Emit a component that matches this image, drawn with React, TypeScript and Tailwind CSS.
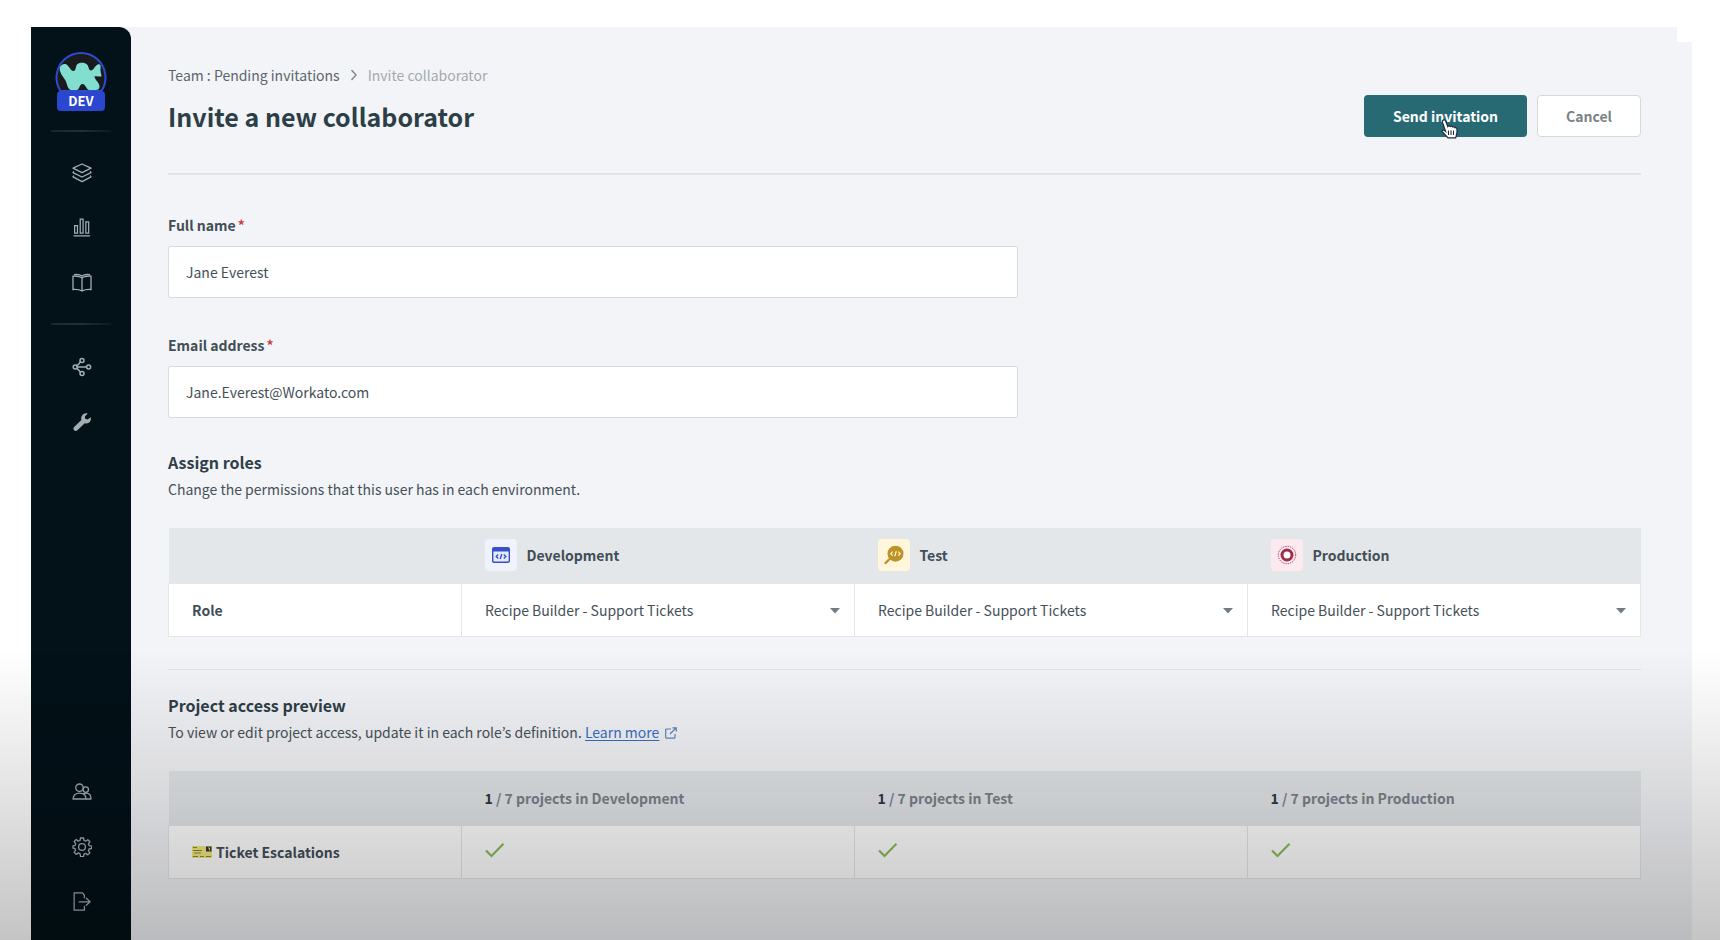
import React, { useState } from 'react';

type IconProps = { className?: string };

const stroke = {
  viewBox: '0 0 20 20',
  fill: 'none',
  stroke: 'currentColor',
  strokeWidth: 1.3,
  strokeLinejoin: 'round' as const,
  strokeLinecap: 'round' as const,
  'aria-hidden': true,
};

const LayersIcon = ({ className }: IconProps) => (
  <svg {...stroke} className={className}>
    <path d="M10 1 19 5.2 10 9.6 1 5.2Z" />
    <path d="M1.6 8.7 1 9.6 10 14 19 9.6 18.4 8.7" />
    <path d="M1.6 13 1 13.9 10 18.6 19 13.9 18.4 13" />
  </svg>
);

const ChartIcon = ({ className }: IconProps) => (
  <svg {...stroke} strokeLinejoin="miter" className={className}>
    <path d="M1.7 8h3v7.8h-3ZM7.6 1.3h3v14.5h-3ZM13.5 4h3v11.8h-3ZM1 18.7h16.5" />
  </svg>
);

const BookIcon = ({ className }: IconProps) => (
  <svg {...stroke} strokeLinejoin="miter" className={className}>
    <path d="M10 4.8V18M10 4.8C8 3.4 5 3 1 3.2V16.5C5 16.3 8 16.8 10 18 12 16.8 15 16.3 19 16.5V3.2C15 3 12 3.4 10 4.8ZM2.5 1.6C6 1.3 8.5 1.8 10 3 11.5 1.8 14 1.3 17.5 1.6" />
  </svg>
);

const NodesIcon = ({ className }: IconProps) => (
  <svg {...stroke} strokeWidth={1.5} className={className}>
    <circle cx="3.2" cy="10" r="2" />
    <circle cx="16.6" cy="10" r="2" />
    <circle cx="10" cy="3.5" r="2" />
    <circle cx="10" cy="16.5" r="2" />
    <path d="M5.2 10h9.4M4.7 8.5c1.6-.6 2.5-1.8 3.7-3.7M4.7 11.5c1.6.6 2.5 1.8 3.7 3.7" />
  </svg>
);

const WrenchIcon = ({ className }: IconProps) => (
  <svg viewBox="0 0 20 20" fill="currentColor" aria-hidden="true" className={className}>
    <path d="M18.7 5.2c.6 2-.1 4-1.5 5.2-1.3 1-3 1.3-4.5.8l-7.3 7.1c-.9.9-2.4.9-3.3 0s-.9-2.3 0-3.2L9.4 8c-.6-1.7-.2-3.8 1.1-5.1C12 1.4 14 1 15.7 1.6L12.9 4.5l.3 2.3 2.4.6Z" />
  </svg>
);

const PeopleIcon = ({ className }: IconProps) => (
  <svg {...stroke} className={className}>
    <circle cx="7.5" cy="5.7" r="3.7" />
    <path d="M1 17c0-3.8 2.6-5.8 6.5-5.8S14 13.2 14 17Z" />
    <circle cx="13.8" cy="7.6" r="2.7" />
    <path d="M11.6 11.9c.7-.5 1.5-.7 2.3-.7 3 0 5.1 2.3 5.1 5.8h-5" />
  </svg>
);

const GearIcon = ({ className }: IconProps) => (
  <svg {...stroke} className={className}>
    <circle cx="10" cy="10" r="3.4" />
    <path d="M8.5 1h3l.5 2.5 1.7.7 2.1-1.5 2.1 2.1-1.5 2.1.7 1.7 2.5.5v2.4l-2.5.5-.7 1.7 1.5 2.1-2.1 2.1-2.1-1.5-1.7.7-.5 2.5h-3L8 16.6l-1.7-.7-2.1 1.5-2.1-2.1 1.5-2.1-.7-1.7L1 11.2V8.8l2-.4.7-1.7-1.6-2.1 2.1-2.1 2.1 1.7 1.7-.7Z" />
  </svg>
);

const ExitIcon = ({ className }: IconProps) => (
  <svg {...stroke} strokeLinejoin="miter" className={className}>
    <path d="M12 6V3.5L10 1H1.2v18H12v-4M6.5 10.3h11M14 6.6l4 3.7-4 3.7" />
  </svg>
);

const Logo = () => (
  <div className="relative w-[52px] h-[60px]">
    <svg viewBox="0 0 52 60" className="w-full h-full" aria-hidden="true">
      <path d="M5.500 40A24.500 24.500 0 1 1 46.500 40Z" fill="#1a1b1c" stroke="#2f4ad0" strokeWidth="2" />
      <path
        d="M5 16C6.500 13.500 9 12.500 11.500 13.500C14.500 15 15.500 20.500 19 20C21 19.500 20.500 14.500 22.500 13C25 11.300 30 11.300 32 13.500C34 15.500 33.500 19.500 36 19.500C39 19.500 40 14 43.500 13.300C45.500 13 46 15 45.500 17.500C45 20.500 46.500 22.500 46.500 25.500C44 26 42 24.500 39.500 25.500C39.500 28.500 44.500 31.500 44.500 35.500C44.500 38 43 39 40.500 39H34.500C31 39 31 33 27.500 33C24 33 25 39 21.500 39H16.500C12.500 39 12.500 33.500 10.500 29.500C8 25.500 3.500 20.500 5 16Z"
        fill="#82dfd0"
      />
    </svg>
    <span className="absolute left-0.5 bottom-0 w-12 h-5 rounded bg-[#2c47cf] text-white text-[13px] leading-5 font-bold text-center">
      DEV
    </span>
  </div>
);

const DevelopmentIcon = () => (
  <svg viewBox="0 0 18 16" className="w-[18px] h-4" aria-hidden="true">
    <rect x="0.7" y="0.7" width="16.6" height="14.6" rx="1.4" fill="#e7ecfb" stroke="#3450cf" strokeWidth="1.4" />
    <path d="M1 1h16v3.5H1Z" fill="#3450cf" />
    <path d="M6.2 7.4 4.2 9.5l2 2.1M11.8 7.4l2 2.1-2 2.1M9.8 7l-1.6 5" fill="none" stroke="#3450cf" strokeWidth="1.4" />
  </svg>
);

const TestIcon = () => (
  <svg viewBox="0 0 20 20" className="w-5 h-5" aria-hidden="true">
    <circle cx="11.5" cy="8.7" r="8" fill="#bb9327" />
    <path d="M5 14.5 1.6 18" stroke="#bb9327" strokeWidth="2.4" strokeLinecap="round" />
    <path d="M8.7 6.7 6.8 8.7l1.9 2M14.3 6.7l1.9 2-1.9 2M12.3 6.2l-1.6 5" fill="none" stroke="#fff4d2" strokeWidth="1.2" />
  </svg>
);

const ProductionIcon = () => (
  <svg viewBox="0 0 20 20" className="w-5 h-5" fill="none" stroke="#a02c49" aria-hidden="true">
    <circle cx="10" cy="10" r="5" strokeWidth="3" fill="#fff" />
    <circle cx="10" cy="10" r="8.7" strokeWidth="1" strokeDasharray="1.2 1.1" />
  </svg>
);

const CheckIcon = () => (
  <svg viewBox="0 0 20 16" className="w-5 h-4 mb-1" fill="none" stroke="#8dbb5a" strokeWidth="2.2" role="img" aria-label="Has access">
    <path d="M1 8.5 6.5 14 18.5 1.8" />
  </svg>
);

const TicketIcon = () => (
  <svg viewBox="0 0 20 12" className="w-5 h-3" aria-hidden="true">
    <path d="M0 0h20v12H0Z" fill="#f0e87c" />
    <path d="M1 1.5h4M1 4.5h9M2 7h7M1 10.5h5M8 10.5h4M14 10.5h5" stroke="#8b8738" strokeWidth="1" />
    <path d="M14 0.5h5.5v5H14Z" fill="#35373a" />
    <path d="M16 2h1.5v2.5" stroke="#efe672" fill="none" />
  </svg>
);

const HandCursor = () => (
  <svg viewBox="0 0 17 20" className="absolute left-[77px] top-6 w-[17px] h-5 pointer-events-none" aria-hidden="true">
    <path
      d="M2 1.2C3 .6 4.2 1 4.7 2.2L6.8 7.5C7.2 6.7 8.6 6.7 9.2 7.5 9.9 6.9 11.2 7.1 11.7 8 12.6 7.5 13.7 7.9 14.1 8.8 15.1 8.5 15.9 9.2 16 10.3V13.5L14.7 18.8H7L1.3 12.7C.8 11.7 2 10.7 3.2 11.3L4.6 12.4 1.4 3.1C1.2 2.3 1.4 1.6 2 1.2Z"
      fill="#fff"
      stroke="#1c2a38"
      strokeWidth="1.2"
    />
    <path d="M7.5 11.5v4.5M10 11.5v4.5M12.5 11.5v4.5" stroke="#1c2a38" strokeWidth="1.1" />
  </svg>
);

const environments = [
  { name: 'Development', icon: <DevelopmentIcon />, tile: 'bg-[#f0f3fe]' },
  { name: 'Test', icon: <TestIcon />, tile: 'bg-[#fff6dc]' },
  { name: 'Production', icon: <ProductionIcon />, tile: 'bg-[#fdeaf0]' },
];

const NavLink = ({ label, children }: { label: string; children: React.ReactNode }) => (
  <a href="#" aria-label={label} className="flex items-center justify-center w-full h-[55px] pl-0.5 text-[#a3adb2] hover:text-white">
    {children}
  </a>
);

const NavDivider = () => <div className="w-[60px] h-0.5 shrink-0 bg-linear-to-r from-[#12282e] via-[#1b3238] to-[#0a1c22]" />;

const Sidebar = () => (
  <aside className="flex flex-col items-center w-[100px] shrink-0 pt-6 pb-[11px] rounded-tr-xl bg-[#031118]">
    <Logo />
    <nav className="flex flex-col items-center grow w-full pt-[19px]">
      <NavDivider />
      <div className="w-full py-[13px]">
        <NavLink label="Projects"><LayersIcon className="w-5 h-5" /></NavLink>
        <NavLink label="Dashboard"><ChartIcon className="w-[19px] h-[19px]" /></NavLink>
        <NavLink label="Library"><BookIcon className="w-5 h-5" /></NavLink>
      </div>
      <NavDivider />
      <div className="w-full py-3.5">
        <NavLink label="Platform"><NodesIcon className="w-5 h-5" /></NavLink>
        <NavLink label="Tools"><WrenchIcon className="w-5 h-5" /></NavLink>
      </div>
      <div className="w-full mt-auto">
        <NavLink label="Team"><PeopleIcon className="w-5 h-5" /></NavLink>
        <NavLink label="Settings"><GearIcon className="w-5 h-5" /></NavLink>
        <NavLink label="Sign out"><ExitIcon className="w-[19px] h-[19px]" /></NavLink>
      </div>
    </nav>
  </aside>
);

type FieldProps = {
  id: string;
  label: string;
  type?: string;
  value: string;
  onChange: (value: string) => void;
};

const Field = ({ id, label, type = 'text', value, onChange }: FieldProps) => (
  <div className="max-w-[850px]">
    <label htmlFor={id} className="block font-bold text-[#424e57]">
      {label}
      <span className="ml-0.5 text-[#cf3f3f]">*</span>
    </label>
    <input
      id={id}
      type={type}
      required
      value={value}
      onChange={(e) => onChange(e.target.value)}
      className="block w-full h-[52px] mt-[11px] px-[17px] bg-white border border-[#d8dbdf] rounded-xs outline-none focus:border-[#25666f]"
    />
  </div>
);

const headCell = 'h-[55px] pl-[23px] text-left font-bold';
const bodyCell = 'h-[53px] pl-[23px] border border-[#e4e6e9] text-left';

const App: React.FC = () => {
  const [fullName, setFullName] = useState('Jane Everest');
  const [email, setEmail] = useState('Jane.Everest@Workato.com');

  return (
    <div className="flex min-h-screen pt-[27px] pl-[31px] pr-7 bg-white font-['Noto_Sans_CJK_KR','Noto_Sans',sans-serif] text-[14px] leading-5 text-[#455159]">
      <div className="relative flex grow bg-[#f3f4f7]">
        {/* Stepped top right corner of the window */}
        <div className="absolute top-0 right-0 w-[15px] h-[15px] bg-white" />
        <Sidebar />

        <main className="grow pt-[38px] pl-[37px] pr-[51px]">
          <form onSubmit={(e) => e.preventDefault()}>
            <header className="pb-9 border-b-2 border-[#e2e4e7]">
              <nav aria-label="Breadcrumb" className="flex items-center gap-2.5">
                <a href="#" className="text-[#5b666d]">Team : Pending invitations</a>
                <svg viewBox="0 0 8 12" className="w-2 h-3" fill="none" stroke="#7d868c" strokeWidth="1.4" aria-hidden="true">
                  <path d="M1.5 1 6 6 1.5 11" />
                </svg>
                <span className="text-[#a3a9af]">Invite collaborator</span>
              </nav>
              <div className="flex items-center justify-between mt-2.5">
                <h1 className="text-[25px] leading-8 font-bold text-[#2c3e48]">Invite a new collaborator</h1>
                <div className="flex gap-2.5">
                  <button type="submit" className="relative w-[163px] h-[42px] rounded bg-[#276a74] text-white font-bold cursor-pointer">
                    Send invitation
                    <HandCursor />
                  </button>
                  <button type="button" className="w-[104px] h-[42px] rounded border border-[#d5d8dc] bg-white text-[#7b8388] font-bold">
                    Cancel
                  </button>
                </div>
              </div>
            </header>

            <div className="flex flex-col gap-[37px] pt-10">
              <Field id="full-name" label="Full name" value={fullName} onChange={setFullName} />
              <Field id="email" label="Email address" type="email" value={email} onChange={setEmail} />
            </div>

            <section className="mt-8 pb-8 border-b border-[#e2e4e7]">
              <h2 className="text-[16px] leading-6 font-bold text-[#2f3f49]">Assign roles</h2>
              <p className="mt-[5px]">Change the permissions that this user has in each environment.</p>
              <table className="w-full mt-[29px] table-fixed border-collapse">
                <thead className="bg-[#e4e7ea] text-[#424e57]">
                  <tr>
                    <td className="w-[293px]" />
                    {environments.map((env) => (
                      <th key={env.name} scope="col" className={headCell}>
                        <div className="flex items-center gap-2.5">
                          <span className={`flex items-center justify-center w-8 h-8 rounded ${env.tile}`}>{env.icon}</span>
                          {env.name}
                        </div>
                      </th>
                    ))}
                  </tr>
                </thead>
                <tbody className="bg-white">
                  <tr>
                    <th scope="row" className={`${bodyCell} font-bold text-[#424e57]`}>Role</th>
                    {environments.map((env) => (
                      <td key={env.name} className={bodyCell}>
                        <div className="relative">
                          <select aria-label={`${env.name} role`} className="w-full h-[50px] pr-10 appearance-none bg-transparent outline-none">
                            <option>Recipe Builder - Support Tickets</option>
                          </select>
                          <svg viewBox="0 0 10 6" className="absolute right-3.5 top-[23px] w-2.5 h-1.5 pointer-events-none" fill="#737c82" aria-hidden="true">
                            <path d="M0 0h10L5 5.5Z" />
                          </svg>
                        </div>
                      </td>
                    ))}
                  </tr>
                </tbody>
              </table>
            </section>

            <section className="pt-[23px] pb-[60px]">
              <h2 className="text-[16px] leading-6 font-bold text-[#2f3f49]">Project access preview</h2>
              <p className="mt-[5px]">
                To view or edit project access, update it in each role’s definition.{' '}
                <a href="#" className="text-[#3b6fc4]">
                  <span className="underline underline-offset-2">Learn more</span>
                  <svg viewBox="0 0 12 12" className="inline ml-1.5 w-3 h-3 align-[-1px]" fill="none" stroke="#5f83bd" strokeWidth="1.2" aria-hidden="true">
                    <path d="M6 2H1.8C1 2 .7 2.3.7 3v7.2c0 .7.3 1 1 1H9c.7 0 1-.3 1-1V7M5 7 11 1M7.5.8h3.8v3.7" />
                  </svg>
                </a>
              </p>
              <table className="w-full mt-[29px] table-fixed border-collapse">
                <thead className="bg-[#e4e7ea] text-[#7a838a]">
                  <tr>
                    <td className="w-[293px]" />
                    {environments.map((env) => (
                      <th key={env.name} scope="col" className={headCell}>
                        <span className="text-[#2f3a41]">1</span> / 7 projects in {env.name}
                      </th>
                    ))}
                  </tr>
                </thead>
                <tbody className="bg-white">
                  <tr>
                    <th scope="row" className={`${bodyCell} font-bold text-[#424e57]`}>
                      <div className="flex items-center gap-1">
                        <TicketIcon />
                        Ticket Escalations
                      </div>
                    </th>
                    {environments.map((env) => (
                      <td key={env.name} className={bodyCell}>
                        <CheckIcon />
                      </td>
                    ))}
                  </tr>
                </tbody>
              </table>
            </section>
          </form>
        </main>
      </div>

      {/* Shade rising from the bottom edge */}
      <div className="fixed inset-x-0 bottom-0 h-[290px] pointer-events-none bg-linear-to-t from-black/23 via-black/11 to-transparent" />
    </div>
  );
};

export default App;
